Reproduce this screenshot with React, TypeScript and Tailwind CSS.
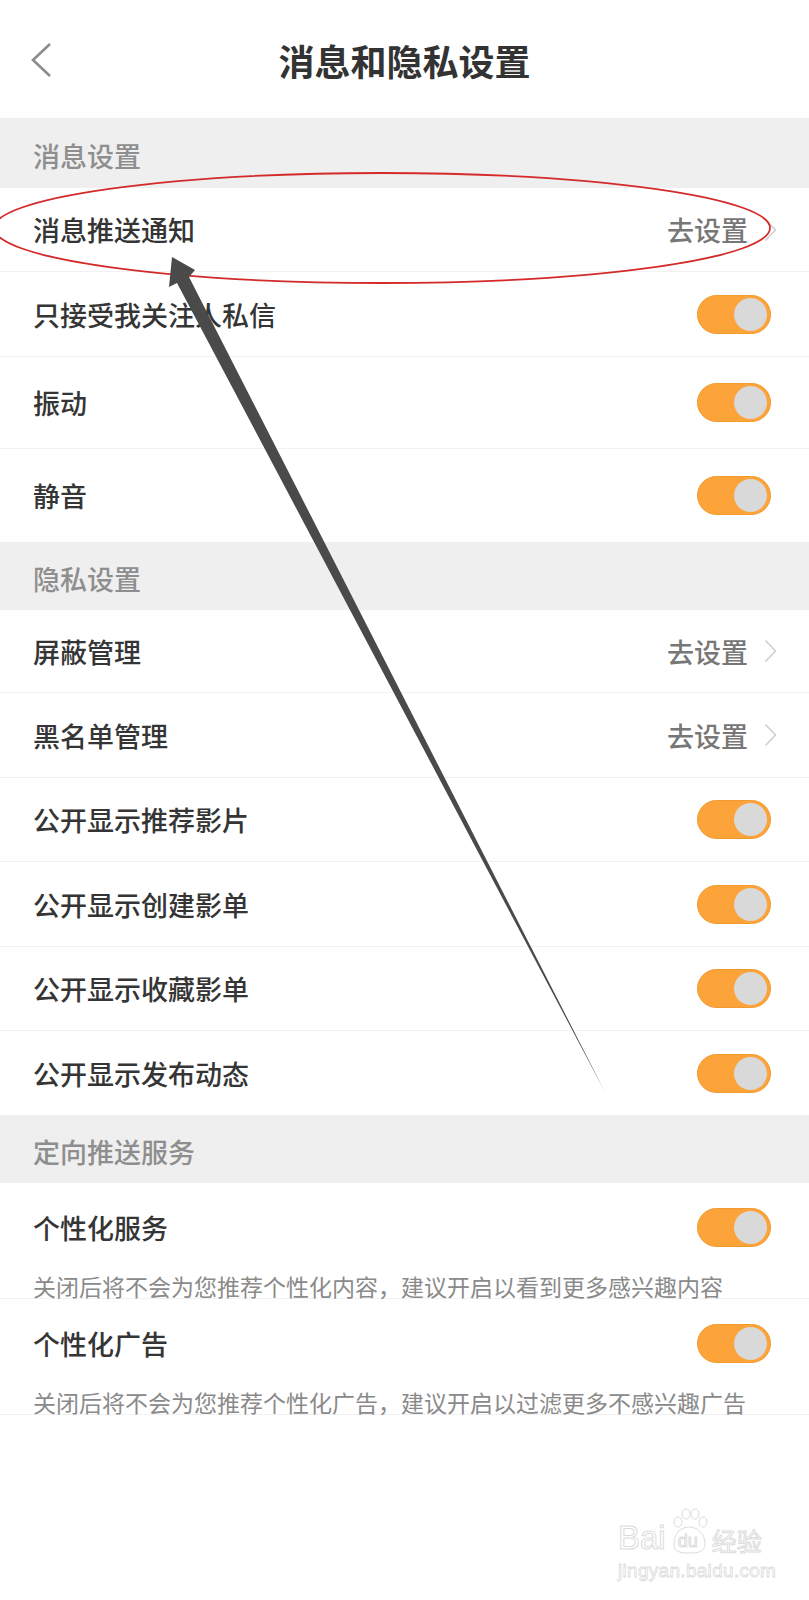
import React from "react";

const FONT = "font-['Noto_Sans_CJK_SC','Noto_Sans',sans-serif]";

function Toggle() {
  return (
    <div className="w-[74px] h-[39px] rounded-full bg-[#fca43a] border border-[#f19a30] flex items-center justify-end pr-[3px] shrink-0">
      <div className="w-[33px] h-[33px] rounded-full bg-[#d9d9d9]" />
    </div>
  );
}

function GoSet() {
  return (
    <div className="flex items-center gap-[16px]">
      <span className="text-[27px] text-[#777777] font-medium leading-none">去设置</span>
      <svg width="13" height="24" viewBox="0 0 13 24" fill="none">
        <polyline points="1.5,1.5 11.5,12 1.5,22.5" stroke="#cfcfcf" strokeWidth="1.6" fill="none" />
      </svg>
    </div>
  );
}

function SectionHeader({ title, h }: { title: string; h: string }) {
  return (
    <div className={`${h} bg-[#efefef] flex items-center pl-[33px] pt-[5px]`}>
      <span className="text-[27px] text-[#8e8e8e] font-medium leading-none">{title}</span>
    </div>
  );
}

function Row({
  label,
  h,
  kind,
  border = true,
}: {
  label: string;
  h: string;
  kind: "toggle" | "go";
  border?: boolean;
}) {
  return (
    <div
      className={`${h} flex items-center justify-between pl-[33px] ${
        kind === "toggle" ? "pr-[38px]" : "pr-[32px]"
      } ${border ? "border-b border-[#f1f1f1]" : ""}`}
    >
      <span className="text-[27px] text-[#353535] font-medium leading-none">{label}</span>
      {kind === "toggle" ? <Toggle /> : <GoSet />}
    </div>
  );
}

function DescRow({ label, desc }: { label: string; desc: string }) {
  return (
    <div className="h-[116px] flex flex-col border-b border-[#f1f1f1] pl-[33px] pr-[38px] pt-[14px]">
      <div className="h-[60px] flex items-center justify-between">
        <span className="text-[27px] text-[#353535] font-medium leading-none">{label}</span>
        <Toggle />
      </div>
      <div className="mt-[17px] h-[24px] flex items-center">
        <span className="text-[23px] text-[#8a8a8a] leading-none whitespace-nowrap">{desc}</span>
      </div>
    </div>
  );
}

function Annotations() {
  return (
    <svg
      className="absolute left-0 top-0 pointer-events-none"
      width="809"
      height="1600"
      viewBox="0 0 809 1600"
    >
      <ellipse cx="382" cy="228" rx="388" ry="55" fill="none" stroke="#d42a2a" strokeWidth="1.8" />
      <polygon
        points="172,257 195,270 189,277 605,1092 177,283 169,287"
        fill="#4a4a4a"
      />
    </svg>
  );
}

function Watermark() {
  return (
    <div className="absolute left-[618px] top-[1508px] flex flex-col items-start pointer-events-none select-none">
      <div className="flex items-end">
        <span className="font-['Liberation_Sans',sans-serif] text-[33px] leading-none text-transparent [-webkit-text-stroke:1px_#dcdcdc]">
          Bai
        </span>
        <div className="relative w-[42px] h-[46px] mx-[2px]">
          <svg width="42" height="46" viewBox="0 0 42 46" className="absolute left-0 top-0">
            <ellipse cx="10" cy="14" rx="4" ry="5" fill="none" stroke="#dcdcdc" strokeWidth="1" />
            <ellipse cx="18" cy="6" rx="4" ry="5" fill="none" stroke="#dcdcdc" strokeWidth="1" />
            <ellipse cx="27" cy="6" rx="4" ry="5" fill="none" stroke="#dcdcdc" strokeWidth="1" />
            <ellipse cx="35" cy="14" rx="4" ry="5" fill="none" stroke="#dcdcdc" strokeWidth="1" />
            <path d="M6 36 C6 24 14 19 21 19 C28 19 37 24 37 36 C37 44 30 45 21 45 C12 45 6 44 6 36 Z" fill="none" stroke="#dcdcdc" strokeWidth="1" />
          </svg>
          <span className="absolute left-[10px] top-[24px] font-['Liberation_Sans',sans-serif] text-[18px] leading-none text-transparent [-webkit-text-stroke:1px_#dcdcdc]">
            du
          </span>
        </div>
        <span className="font-['Noto_Sans_CJK_SC',sans-serif] text-[25px] leading-none text-transparent [-webkit-text-stroke:1px_#dcdcdc] mb-[1px]">
          经验
        </span>
      </div>
      <span className="mt-[7px] font-['Liberation_Sans',sans-serif] text-[19px] leading-none text-transparent [-webkit-text-stroke:0.8px_#dcdcdc] tracking-[0.3px]">
        jingyan.baidu.com
      </span>
    </div>
  );
}

export default function App() {
  return (
    <div className={`relative w-[809px] min-h-[1600px] bg-white ${FONT} overflow-hidden`}>
      {/* Header */}
      <div className="h-[118px] flex items-center relative">
        <div className="absolute left-[30px] top-[42px]">
          <svg width="24" height="36" viewBox="0 0 24 36" fill="none">
            <polyline points="20,2 3,18 20,34" stroke="#8c8c8c" strokeWidth="2.6" fill="none" />
          </svg>
        </div>
        <div className="flex-1 flex justify-center pt-[1px]">
          <span className="text-[36px] font-bold text-[#333333] leading-none">消息和隐私设置</span>
        </div>
      </div>

      <SectionHeader title="消息设置" h="h-[70px]" />
      <Row label="消息推送通知" h="h-[84px]" kind="go" />
      <Row label="只接受我关注人私信" h="h-[85px]" kind="toggle" />
      <Row label="振动" h="h-[92px]" kind="toggle" />
      <Row label="静音" h="h-[93px]" kind="toggle" border={false} />

      <SectionHeader title="隐私设置" h="h-[68px]" />
      <Row label="屏蔽管理" h="h-[83px]" kind="go" />
      <Row label="黑名单管理" h="h-[85px]" kind="go" />
      <Row label="公开显示推荐影片" h="h-[84px]" kind="toggle" />
      <Row label="公开显示创建影单" h="h-[85px]" kind="toggle" />
      <Row label="公开显示收藏影单" h="h-[84px]" kind="toggle" />
      <Row label="公开显示发布动态" h="h-[84px]" kind="toggle" border={false} />

      <SectionHeader title="定向推送服务" h="h-[68px]" />
      <DescRow label="个性化服务" desc="关闭后将不会为您推荐个性化内容，建议开启以看到更多感兴趣内容" />
      <DescRow label="个性化广告" desc="关闭后将不会为您推荐个性化广告，建议开启以过滤更多不感兴趣广告" />

      <Annotations />
      <Watermark />
    </div>
  );
}
